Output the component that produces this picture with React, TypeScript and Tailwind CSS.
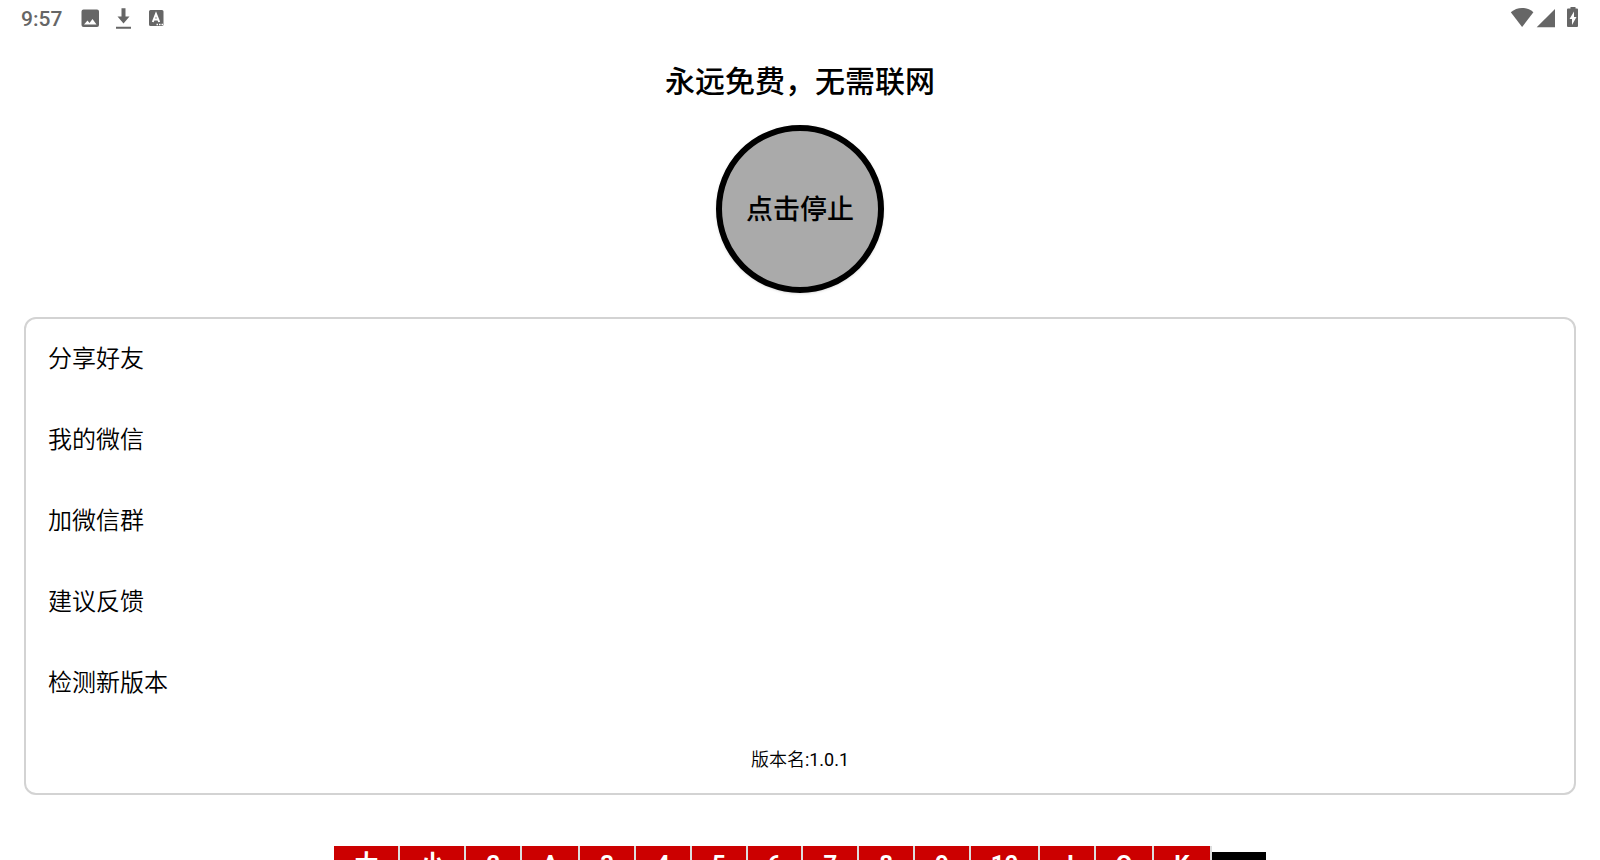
import React, { useState } from 'react';

const menuItems = [
  { label: '分享好友', id: 'share' },
  { label: '我的微信', id: 'wechat' },
  { label: '加微信群', id: 'group' },
  { label: '建议反馈', id: 'feedback' },
  { label: '检测新版本', id: 'update' },
];

const cards = ['大', '小', '2', 'A', '3', '4', '5', '6', '7', '8', '9', '10', 'J', 'Q', 'K'];

const StatusBar = () => (
  <header className="flex h-9 items-center justify-between pr-5 pl-[21px] text-[#666]">
    <div className="flex items-center">
      <span className="w-[59px] pt-0.5 text-[21px] leading-9 font-medium">9:57</span>
      {/* Picture */}
      <svg width="20" height="36" viewBox="0 0 20 36" fill="currentColor" aria-hidden="true">
        <path d="M3.500 9.500h13.500a2 2 0 0 1 2 2v13.500a2 2 0 0 1-2 2h-13.500a2 2 0 0 1-2-2v-13.500a2 2 0 0 1 2-2zM4 24.500h12.500l-4-5.500-3 4-2-2.500z" fillRule="evenodd" />
      </svg>
      {/* Download */}
      <svg className="ml-[15px]" width="17" height="36" viewBox="0 0 17 36" fill="currentColor" aria-hidden="true">
        <path d="M6.500 8.300h4v8.200h4l-6 7-6-7h4zM1 26.800h15v2h-15z" />
      </svg>
      {/* Keyboard */}
      <svg className="ml-4" width="17" height="36" viewBox="0 0 17 36" fill="currentColor" aria-hidden="true">
        <path d="M2.500 10h11.500a1.500 1.500 0 0 1 1.500 1.500v13a1.500 1.500 0 0 1-1.500 1.500h-11.500a1.500 1.500 0 0 1-1.500-1.500v-13a1.500 1.500 0 0 1 1.500-1.500z" />
        <path d="M4.800 22l3.200-8 3.200 8M6 19.500h4" fill="none" stroke="white" strokeWidth="2" />
        <path d="M8.500 23.700h1.500v1.500h-1.500zM11 23.700h1.500v1.500h-1.500zM13.500 23.700h1.500v1.500h-1.500z" fill="white" />
      </svg>
    </div>
    <svg width="70" height="36" viewBox="0 0 70 36" fill="currentColor" aria-hidden="true">
      <path d="M.8 12.300c6.500-5.800 16-5.800 22.600 0l-11.300 14.700z" />
      <path d="M45 9v18.300h-18.300z" />
      <path fillRule="evenodd" d="M60.500 8.500v-1.500h5v1.500h1.500a1 1 0 0 1 1 1v16.500a1 1 0 0 1-1 1h-9a1 1 0 0 1-1-1v-16.500a1 1 0 0 1 1-1zM64 11.500l-4.500 7.500h2.500v6l4.500-8h-2.500z" />
    </svg>
  </header>
);

const App = () => {
  const [running, setRunning] = useState(true);

  return (
    <div className="flex h-screen flex-col overflow-hidden bg-white font-[Roboto,'Noto_Sans_CJK_SC',sans-serif] text-black">
      <StatusBar />

      <main className="flex flex-col items-center px-6">
        <h1 className="mt-6 text-[30px] leading-[44px] font-medium">永远免费，无需联网</h1>
        <button
          className="mt-[21px] h-42 w-42 rounded-full border-6 border-black bg-[#aaa] pt-0.5 text-[27px] font-medium shadow-sm"
          onClick={() => setRunning(!running)}
        >
          {running ? '点击停止' : '点击开始'}
        </button>

        <section className="mt-6 w-full rounded-xl border-2 border-[#d3d3d3]">
          <nav>
            {menuItems.map((item) => (
              <button key={item.id} className="block h-[81px] w-full px-[22px] pb-0.5 text-left text-2xl font-[350]">
                {item.label}
              </button>
            ))}
          </nav>
          <p className="pt-[22px] pb-[19px] text-center text-lg leading-7 font-[350]">
            版本名<span className="font-normal">:1.0.1</span>
          </p>
        </section>
      </main>

      {/* Card counter */}
      <div className="mt-[51px] flex shrink-0 items-start justify-center">
        {cards.map((card) => (
          <div
            key={card}
            className="h-9 border-r-2 border-[#ddd] bg-[#c00] px-5 text-2xl leading-9 font-bold text-white"
          >
            {card}
          </div>
        ))}
        <div className="mt-1.5 h-9 w-[54px] bg-black"></div>
      </div>
    </div>
  );
};

export default App;
